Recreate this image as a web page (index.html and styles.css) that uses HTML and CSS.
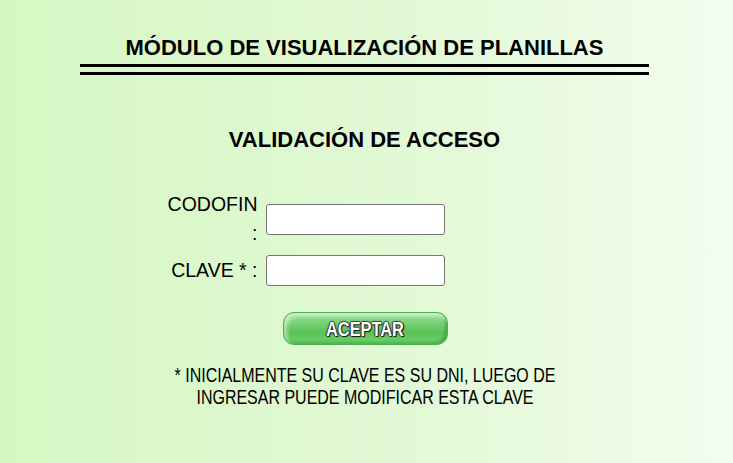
FILE: index.html
```html
<!DOCTYPE html>
<html lang="es">
<head>
<meta charset="utf-8">
<title>Módulo de Visualización de Planillas</title>
<link rel="stylesheet" href="styles.css">
</head>
<body>
<div class="page">
  <h1 class="title">MÓDULO DE VISUALIZACIÓN DE PLANILLAS</h1>
  <div class="rule"></div>
  <h2 class="subtitle">VALIDACIÓN DE ACCESO</h2>
  <form class="login" onsubmit="return false;">
    <label class="lbl" for="codofin">CODOFIN :</label>
    <input class="field" id="codofin" type="text">
    <label class="lbl" for="clave">CLAVE * :</label>
    <input class="field" id="clave" type="password">
    <span class="spacer"></span>
    <button class="btn" type="submit"><span class="btn-text">ACEPTAR</span></button>
  </form>
  <p class="note">* INICIALMENTE SU CLAVE ES SU DNI, LUEGO DE INGRESAR PUEDE MODIFICAR ESTA CLAVE</p>
</div>
</body>
</html>
```
FILE: styles.css
```css
html, body {
  margin: 0;
  height: 100%;
}
body {
  background: linear-gradient(to right, #d5f7c3 0%, #e2f9d5 55%, #f3fdef 100%);
  font-family: "Liberation Sans", Arial, sans-serif;
  color: #000;
}
.page {
  display: flex;
  flex-direction: column;
  align-items: center;
  padding: 35px 4px 0 0;
}
.title {
  margin: 0;
  font-size: 22px;
  line-height: 25px;
  font-weight: bold;
}
.rule {
  width: 569px;
  height: 5px;
  margin-top: 4px;
  border-top: 3px solid #000;
  border-bottom: 3px solid #000;
}
.subtitle {
  margin: 52px 0 0;
  font-size: 22px;
  line-height: 25px;
  font-weight: bold;
}
.login {
  margin-top: 38px;
  display: grid;
  grid-template-columns: 92px 179px;
  column-gap: 8px;
  row-gap: 7px;
  align-items: center;
  margin-right: 119px;
}
.lbl {
  font-size: 19.5px;
  line-height: 29px;
  text-align: right;
}
.field {
  box-sizing: border-box;
  width: 179px;
  height: 31px;
  margin: 0;
  border: 1px solid #767676;
  border-radius: 3px;
  background: #fff;
}
.btn {
  margin: 19px 0 0 17px;
  width: 165px;
  height: 33px;
  border: 1px solid #4fae4f;
  border-radius: 11px;
  background: linear-gradient(to bottom, #9fe29b 0%, #7bd378 30%, #58c256 62%, #6fd56d 100%);
  box-shadow: inset 3px 3px 4px rgba(255,255,255,0.55), inset -2px -2px 3px rgba(30,110,30,0.4);
  padding: 0;
  display: flex;
  align-items: center;
  justify-content: center;
}
.btn-text {
  display: inline-block;
  color: #fff;
  font-family: "Liberation Sans", Arial, sans-serif;
  font-weight: bold;
  font-size: 21px;
  line-height: 24px;
  transform: scaleX(0.78);
  text-shadow: 0 0 1px #111, 1px 1px 1px #111, -1px 0 1px #333, 0 -1px 1px #444, 1px 0 1px #222;
}
.note {
  margin: 19px 0 0;
  width: 488px;
  text-align: center;
  font-size: 19.5px;
  line-height: 22px;
  transform: scaleX(0.82);
}
```
